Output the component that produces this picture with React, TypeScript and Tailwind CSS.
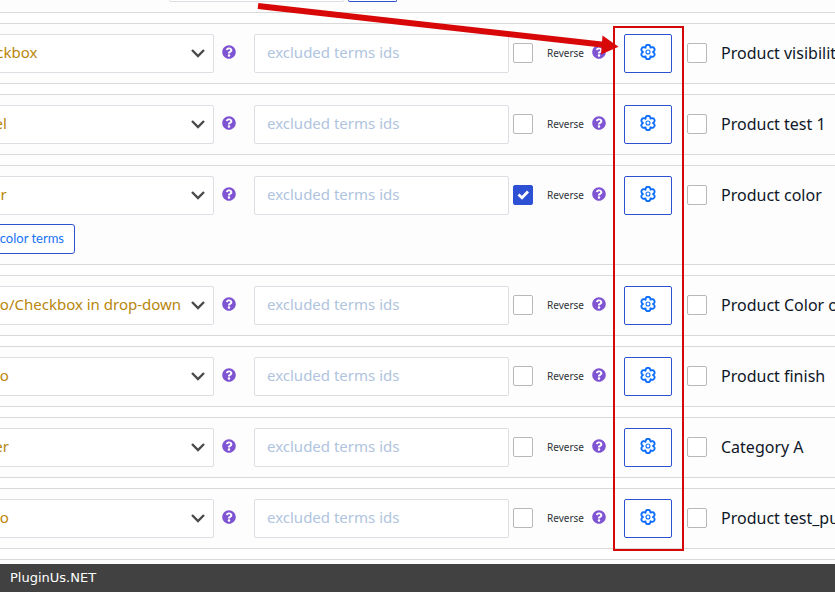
import React from 'react';
import { FaQuestionCircle } from 'react-icons/fa';

interface FilterRow {
  id: string;
  view: string;
  title: string;
  reverse?: boolean;
  hasTerms?: boolean;
}

const rows: FilterRow[] = [
  { id: 'visibility', view: 'Checkbox', title: 'Product visibility' },
  { id: 'test-1', view: 'Label', title: 'Product test 1' },
  { id: 'color', view: 'Color', title: 'Product color', reverse: true, hasTerms: true },
  { id: 'color-2', view: 'Radio/Checkbox in drop-down', title: 'Product Color one' },
  { id: 'finish', view: 'Radio', title: 'Product finish' },
  { id: 'category-a', view: 'Slider', title: 'Category A' },
  { id: 'test-pu', view: 'Radio', title: 'Product test_pu' },
];

const views = ['Checkbox', 'Label', 'Color', 'Radio/Checkbox in drop-down', 'Radio', 'Slider'];

const Help: React.FC = () => (
  <button type="button" aria-label="Help" className="shrink-0 pb-[2px] text-[#7f54d3]">
    <FaQuestionCircle size={14} />
  </button>
);

const Gear: React.FC = () => (
  <svg viewBox="-8 -8 16 16" className="h-4 w-4" fill="none" stroke="currentColor" strokeLinejoin="round">
    <path
      strokeWidth="1.9"
      d="M-2.5-4.33C-2.6-8.2 2.6-8.2 2.5-4.33C5.8-6.35 8.4-1.85 5 0C8.4 1.85 5.8 6.35 2.5 4.33C2.6 8.2-2.6 8.2-2.5 4.33C-5.8 6.35-8.4 1.85-5 0C-8.4-1.85-5.8-6.35-2.5-4.33Z"
    />
    <circle r="2" strokeWidth="1.1" />
  </svg>
);

const Tick: React.FC<{ id: string; checked?: boolean }> = ({ id, checked }) => (
  <span className="relative h-5 w-5 shrink-0">
    <input
      id={id}
      type="checkbox"
      defaultChecked={checked}
      className="peer block h-5 w-5 appearance-none rounded-xs border border-[#b8b8b8] bg-white checked:border-[#2e50d4] checked:bg-[#2e50d4]"
    />
    <svg viewBox="0 0 20 20" className="pointer-events-none absolute inset-0 hidden h-5 w-5 peer-checked:block">
      <path d="M5.5 9.5 9 12.7 15 6.5" fill="none" stroke="#fff" strokeWidth="2.8" />
    </svg>
  </span>
);

const Row: React.FC<{ row: FilterRow }> = ({ row }) => (
  <li className="overflow-hidden border-y border-[#d9d9d9] bg-[#fdfdfd] py-[10px]">
    <div className="flex items-center">
      <div className="relative -ml-11 w-[258px] shrink-0">
        <select
          aria-label={`${row.title} view`}
          defaultValue={row.view}
          className="block h-[39px] w-full appearance-none rounded-xs border border-[#dcdee4] bg-white px-3 pb-[2px] text-[15px] text-[#b8860b]"
        >
          {views.map((view) => (
            <option key={view}>{view}</option>
          ))}
        </select>
        <svg viewBox="0 0 14 9" className="pointer-events-none absolute top-[15px] right-[9px] h-[9px] w-[14px]">
          <path d="M1 1 7 7 13 1" fill="none" stroke="#4a4a4a" strokeWidth="2.4" />
        </svg>
      </div>
      <div className="ml-2 flex shrink-0 pb-px">
        <Help />
      </div>
      <input
        type="text"
        aria-label={`${row.title} excluded terms`}
        placeholder="excluded terms ids"
        className="ml-[18px] h-[39px] w-[255px] shrink-0 rounded-xs border border-[#dcdee4] bg-white px-3 pb-1 text-[15px] placeholder:text-[#b0c4de]"
      />
      <div className="ml-1 flex shrink-0 items-center pb-px">
        <Tick id={`reverse-${row.id}`} checked={row.reverse} />
        <label htmlFor={`reverse-${row.id}`} className="ml-[14px] w-[45px] text-[10px] text-[#2c3338]">
          Reverse
        </label>
        <Help />
      </div>
      <button
        type="button"
        aria-label={`${row.title} settings`}
        className="ml-[18px] flex h-[39px] w-12 shrink-0 items-center justify-center rounded-xs border border-[#2e50d4] bg-white pb-[3px] text-[#0d6efd]"
      >
        <Gear />
      </button>
      <div className="ml-[15px] flex min-w-0 items-center pb-px">
        <Tick id={`active-${row.id}`} />
        <label htmlFor={`active-${row.id}`} className="ml-[14px] text-[16px] whitespace-nowrap text-[#0f1728]">
          {row.title}
        </label>
      </div>
    </div>
    {row.hasTerms && (
      <button
        type="button"
        className="mt-[9px] -ml-11 block h-[30px] w-[119px] rounded-[3px] border border-[#2e50d4] bg-white pr-[10px] text-right font-['Lato',sans-serif] text-[13px] text-[#1a73f5]"
      >
        color terms
      </button>
    )}
  </li>
);

const App: React.FC = () => (
  <div className="relative overflow-hidden bg-white font-['Noto_Sans',sans-serif]">
    <div className="flex h-[13px] items-start border-b border-[#d9d9d9] bg-[#fdfdfd] pl-[169px]">
      <div className="h-[2px] w-[175px] rounded-b-xs border border-t-0 border-[#dcdee4] bg-white" />
      <div className="ml-1 h-[2px] w-[49px] rounded-b-xs border border-t-0 border-[#2e50d4] bg-white" />
    </div>
    <ul className="flex flex-col gap-[10px] py-[10px]">
      {rows.map((row) => (
        <Row key={row.id} row={row} />
      ))}
    </ul>
    <div className="h-[5px] border-t border-[#d9d9d9] bg-[#fdfdfd]" />
    <footer className="flex h-7 items-center bg-[#414141] px-[10px] font-['DejaVu_Sans',sans-serif] text-[13px] text-white">
      PluginUs.NET
    </footer>

    {/* callout around the settings buttons */}
    <svg width="700" height="560" viewBox="0 0 700 560" className="pointer-events-none absolute top-0 left-0">
      <rect x="614" y="27" width="69" height="523" fill="none" stroke="#d40808" strokeWidth="2" />
      <path d="M258 6 606 45" stroke="#d80808" strokeWidth="6" />
      <path d="M602.5 35.5 618.5 46.7 601 54.5Z" fill="#d80808" />
    </svg>
  </div>
);

export default App;
